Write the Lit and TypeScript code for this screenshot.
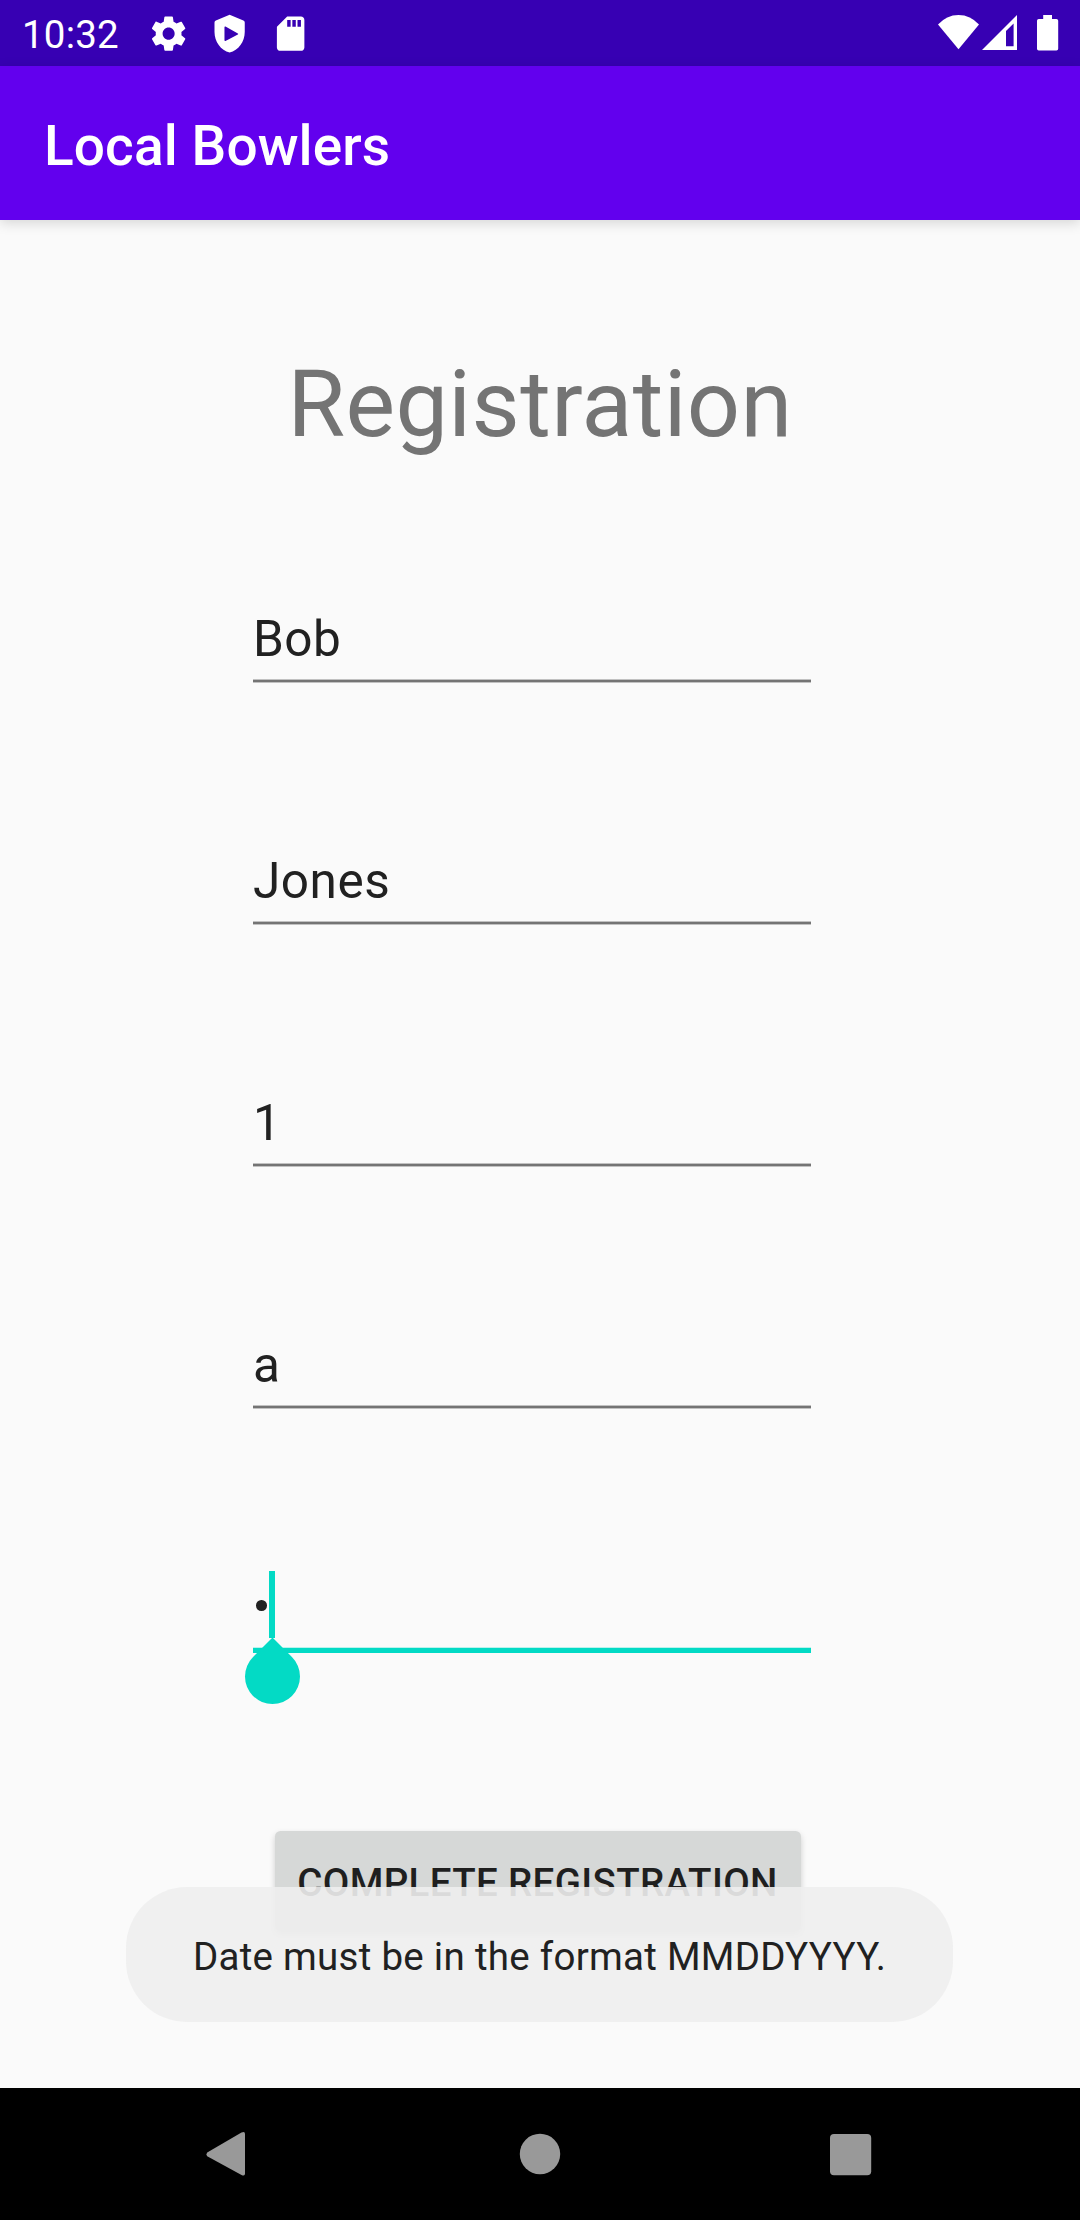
import { LitElement, html, css } from "lit";
import { customElement, property } from "lit/decorators.js";
import { classMap } from "lit/directives/class-map.js";

@customElement("status-bar")
class StatusBar extends LitElement {
  static styles = css`
    :host {
      display: flex;
      justify-content: space-between;
      height: 66px;
      background: #3700b3;
      color: #fff;
    }
    .left {
      display: flex;
      align-items: center;
      padding-left: 22px;
    }
    .clock {
      width: 126px;
      font-size: 38.5px;
      line-height: 45px;
      padding-top: 3px;
      letter-spacing: 0.2px;
    }
    .notifications {
      display: flex;
      gap: 19.6px;
      padding-top: 1px;
    }
    .icon {
      display: block;
      width: 41.25px;
      height: 41.25px;
      fill: #fff;
    }
    .system {
      display: block;
      width: 160px;
      height: 66px;
      fill: #fff;
    }
  `;
  render() {
    return html`
      <div class="left">
        <span class="clock">10:32</span>
        <div class="notifications">
          <svg class="icon" viewBox="0 0 24 24">
            <path
              d="M19.43 12.98c.04-.32.07-.64.07-.98s-.03-.66-.07-.98l2.11-1.65c.19-.15.24-.42.12-.64l-2-3.46c-.12-.22-.39-.3-.61-.22l-2.49 1c-.52-.4-1.08-.73-1.69-.98l-.38-2.65C14.46 2.18 14.25 2 14 2h-4c-.25 0-.46.18-.49.42l-.38 2.65c-.61.25-1.17.59-1.69.98l-2.49-1c-.23-.09-.49 0-.61.22l-2 3.46c-.13.22-.07.49.12.64l2.11 1.65c-.04.32-.07.65-.07.98s.03.66.07.98l-2.11 1.65c-.19.15-.24.42-.12.64l2 3.46c.12.22.39.3.61.22l2.49-1c.52.4 1.08.73 1.69.98l.38 2.65c.03.24.24.42.49.42h4c.25 0 .46-.18.49-.42l.38-2.65c.61-.25 1.17-.59 1.69-.98l2.49 1c.23.09.49 0 .61-.22l2-3.46c.12-.22.07-.49-.12-.64l-2.11-1.65zM12 15.5c-1.93 0-3.5-1.57-3.5-3.5s1.57-3.5 3.5-3.5 3.5 1.57 3.5 3.5-1.57 3.5-3.5 3.5z"
            />
          </svg>
          <svg class="icon" viewBox="0 0 24 24">
            <path
              fill-rule="evenodd"
              d="M12 1 4 4.3Q3.2 4.7 3.2 5.5V11c0 5.55 3.64 10.74 8.8 12 5.16-1.26 8.8-6.45 8.8-12V5.5Q20.8 4.7 20 4.3zM9.6 7.9 16.8 11.9q.5.3 0 .6L9.6 16.3q-.6.2-.6-.4V8.3q0-.6.6-.4z"
            />
          </svg>
          <svg class="icon" viewBox="0 0 24 24">
            <path
              fill-rule="evenodd"
              d="M18 2h-8L4.02 8 4 20c0 1.1.9 2 2 2h12c1.1 0 2-.9 2-2V4c0-1.1-.9-2-2-2zM12 8h-2V4h2v4zm3 0h-2V4h2v4zm3 0h-2V4h2v4z"
            />
          </svg>
        </div>
      </div>
      <svg class="system" viewBox="0 0 160 66">
        <path d="M38.5 49.3 18 24.6Q26.5 15 38.5 15T59 24.6Z" />
        <path
          fill-rule="evenodd"
          d="M62 50 97 15v35zM86 31v15.2h7.6V23.6z"
        />
        <path
          d="M123.2 15h8.8v4h4.4q1.8 0 1.8 1.8v28q0 1.8-1.8 1.8h-17.6q-1.8 0-1.8-1.8v-28q0-1.8 1.8-1.8h4.4z"
        />
      </svg>
    `;
  }
}

@customElement("text-field")
class TextField extends LitElement {
  @property() value = "";
  @property({ type: Boolean }) focused = false;

  static styles = css`
    :host {
      display: block;
      height: 124px;
    }
    .value {
      display: flex;
      height: 67px;
      padding-top: 48px;
      font-size: 49.5px;
      line-height: 71px;
      color: #212121;
      letter-spacing: 0.5px;
    }
    .underline {
      height: 2px;
      margin-top: 8px;
      background: #747474;
      border: solid #c1c1c1;
      border-width: 1px 0;
    }
    .focused .value {
      padding-top: 47px;
    }
    .focused .underline {
      height: 5px;
      margin-top: 9px;
      border-width: 1px 0 0;
      border-color: #b9f2ec;
      background: #03dac5;
    }
    .dot {
      width: 10.6px;
      height: 10.6px;
      margin: 29.3px 2.4px 0 3px;
      border-radius: 50%;
      background: #212121;
    }
    .caret {
      position: relative;
      width: 6px;
      height: 67px;
      background: #03dac5;
    }
    .handle {
      position: absolute;
      left: -24px;
      top: 78px;
      width: 55px;
      height: 55px;
      border-radius: 0 50% 50% 50%;
      background: #03dac5;
      transform: rotate(45deg);
    }
  `;
  render() {
    return html`
      <div class=${classMap({ field: true, focused: this.focused })}>
        <div class="value">
          ${this.focused
            ? html`<span class="dot"></span
                ><span class="caret"><span class="handle"></span></span>`
            : this.value}
        </div>
        <div class="underline"></div>
      </div>
    `;
  }
}

@customElement("nav-bar")
class NavBar extends LitElement {
  static styles = css`
    :host {
      display: flex;
      justify-content: space-between;
      align-items: center;
      height: 132px;
      padding: 0 200px;
      background: #000;
    }
    .icon {
      display: block;
      width: 60px;
      height: 60px;
      fill: #999;
    }
  `;
  render() {
    return html`
      <svg class="icon" viewBox="0 0 60 60">
        <path
          d="M7.2 28.4 41.5 8.5Q45 6.8 45 10V49.6Q45 52.6 41.5 51L7.2 32.2Q5.4 30.3 7.2 28.4z"
        />
      </svg>
      <svg class="icon" viewBox="0 0 60 60">
        <circle cx="30" cy="30" r="20.2" />
      </svg>
      <svg class="icon" viewBox="0 0 60 60">
        <rect x="10" y="10" width="41.2" height="41.2" rx="4" />
      </svg>
    `;
  }
}

@customElement("app-root")
class AppRoot extends LitElement {
  static styles = css`
    :host {
      display: block;
      font-family: Roboto, sans-serif;
    }
    .screen {
      position: relative;
      display: flex;
      flex-direction: column;
      width: 1080px;
      height: 2220px;
      overflow: hidden;
      background: #fafafa;
    }
    .toolbar {
      display: flex;
      align-items: center;
      box-sizing: border-box;
      height: 154px;
      padding: 6px 44px 0;
      background: #6200ee;
      color: #fff;
      font-size: 55px;
      font-weight: 500;
      line-height: 64px;
      letter-spacing: 0.1px;
      box-shadow: 0 3px 12px rgba(0, 0, 0, 0.15);
      z-index: 1;
    }
    .content {
      flex: 1;
      display: flex;
      flex-direction: column;
      align-items: center;
    }
    .title {
      margin: 129px 0 0;
      font-size: 93.5px;
      line-height: 110px;
      font-weight: 400;
      letter-spacing: 0.4px;
      color: #747474;
    }
    .form {
      display: flex;
      flex-direction: column;
      gap: 118px;
      width: 558px;
      margin: 97px 0 0 -16px;
    }
    .submit {
      height: 100px;
      width: 526px;
      margin: 183px 0 0 -5px;
      padding: 3px 0 0;
      border: 0;
      border-radius: 5.5px;
      background: #d6d8d7;
      box-shadow: 0 3px 6px rgba(0, 0, 0, 0.18);
      font: 500 38.5px/97px Roboto, sans-serif;
      letter-spacing: 0.35px;
      color: #1f1f1f;
    }
    .toast {
      position: absolute;
      left: 126px;
      top: 1887px;
      width: 827px;
      height: 135px;
      border-radius: 61px;
      background: rgba(238, 238, 238, 0.9);
      color: #212121;
      font-size: 38.5px;
      line-height: 139px;
      letter-spacing: 0.28px;
      text-align: center;
      white-space: nowrap;
    }
  `;
  render() {
    return html`
      <div class="screen">
        <status-bar></status-bar>
        <header class="toolbar">Local Bowlers</header>
        <main class="content">
          <h1 class="title">Registration</h1>
          <div class="form">
            ${["Bob", "Jones", "1", "a"].map(
              (v) => html`<text-field .value=${v}></text-field>`
            )}
            <text-field focused></text-field>
          </div>
          <button class="submit">COMPLETE REGISTRATION</button>
        </main>
        <nav-bar></nav-bar>
        <div class="toast" role="status">
          Date must be in the format MMDDYYYY.
        </div>
      </div>
    `;
  }
}
